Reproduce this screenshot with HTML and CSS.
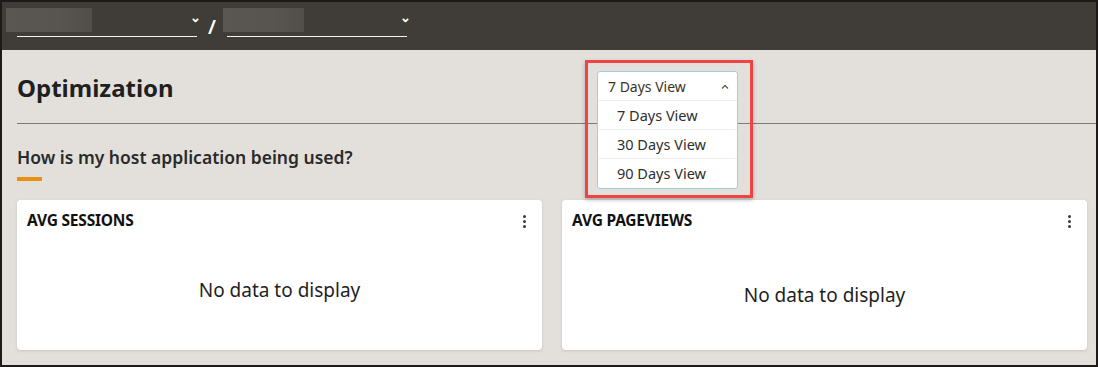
FILE: index.html
```html
<!DOCTYPE html>
<html lang="en">
<head>
    <meta charset="UTF-8">
    <meta name="viewport" content="width=device-width, initial-scale=1.0">
    <title>Optimization</title>
    <link rel="stylesheet" href="styles.css">
</head>
<body>
    <div class="frame">
        <div class="topbar">
            <div class="picker">
                <div class="redact redact-first"></div>
                <span class="chevron">&#8964;</span>
            </div>
            <span class="slash">/</span>
            <div class="picker">
                <div class="redact redact-second"></div>
                <span class="chevron">&#8964;</span>
            </div>
        </div>

        <div class="content">
            <div class="page-head">
                <h1>Optimization</h1>
            </div>
            <div class="divider"></div>

            <h2 class="section-title">How is my host application being used?</h2>
            <div class="accent"></div>

            <div class="cards">
                <div class="card">
                    <div class="card-header">
                        <span class="card-title">AVG SESSIONS</span>
                        <span class="kebab"><i></i><i></i><i></i></span>
                    </div>
                    <div class="card-body">No data to display</div>
                </div>
                <div class="card">
                    <div class="card-header">
                        <span class="card-title">AVG PAGEVIEWS</span>
                        <span class="kebab"><i></i><i></i><i></i></span>
                    </div>
                    <div class="card-body card-body-low">No data to display</div>
                </div>
            </div>

            <!-- open view selector, highlighted -->
            <div class="highlight">
                <div class="listbox">
                    <div class="listbox-value">
                        <span>7 Days View</span>
                        <svg class="caret" width="8" height="5" viewBox="0 0 8 5"><path d="M1 4.5 L4 1.5 L7 4.5" fill="none" stroke="#6b5a44" stroke-width="1.3"/></svg>
                    </div>
                    <div class="option">7 Days View</div>
                    <div class="option">30 Days View</div>
                    <div class="option">90 Days View</div>
                </div>
            </div>
        </div>
    </div>
</body>
</html>
```

FILE: styles.css
```css
* {
    margin: 0;
    padding: 0;
    box-sizing: border-box;
}

body {
    font-family: "Noto Sans", "Open Sans", sans-serif;
    background: #e3e0dc;
    color: #1f1f1f;
}

.frame {
    width: 1098px;
    height: 367px;
    border: 2px solid #1c1b1a;
    background: #e3e0dc;
    overflow: hidden;
}

.topbar {
    height: 48px;
    background: #403c37;
    display: flex;
    align-items: flex-start;
    padding-left: 15px;
    padding-top: 11px;
}

.picker {
    position: relative;
    width: 180px;
    height: 24px;
    border-bottom: 1px solid #f2f2f2;
}

.redact {
    position: absolute;
    top: -5px;
    height: 24px;
    background: linear-gradient(90deg, #5a5651 0%, #58544f 60%, #524e49 100%);
}

.redact-first {
    left: -11px;
    width: 86px;
}

.redact-second {
    left: -4px;
    width: 81px;
}

.chevron {
    position: absolute;
    right: -4px;
    top: -5px;
    color: #ffffff;
    font-size: 13px;
    font-weight: 700;
}

.slash {
    color: #ffffff;
    font-size: 20px;
    font-weight: 600;
    width: 30px;
    text-align: center;
    line-height: 24px;
    margin-top: 2px;
}

.content {
    position: relative;
    padding: 0 9px 0 15px;
}

.page-head {
    height: 73px;
    display: flex;
    align-items: center;
    padding-top: 2px;
}

.page-head h1 {
    font-size: 24px;
    font-weight: 700;
    color: #1f1f1f;
}

.divider {
    height: 1px;
    background: #7d7b78;
    margin-right: -9px;
}

.section-title {
    font-size: 17.5px;
    font-weight: 600;
    color: #2a2a2a;
    margin-top: 21px;
    line-height: 24px;
}

.accent {
    width: 25px;
    height: 4px;
    background: #e8900f;
    margin-top: 8px;
}

.cards {
    display: grid;
    grid-template-columns: 1fr 1fr;
    gap: 20px;
    margin-top: 19px;
}

.card {
    background: #ffffff;
    border-radius: 4px;
    height: 150px;
    box-shadow: 0 1px 3px rgba(0, 0, 0, 0.12);
    display: flex;
    flex-direction: column;
}

.card-header {
    display: flex;
    justify-content: space-between;
    align-items: center;
    padding: 9px 16px 0 10px;
}

.card-title {
    font-size: 15.5px;
    font-weight: 700;
    color: #111111;
    letter-spacing: -0.2px;
}

.kebab {
    display: flex;
    flex-direction: column;
    gap: 2px;
    padding-top: 2px;
}

.kebab i {
    width: 3px;
    height: 3px;
    border-radius: 50%;
    background: #3a3a3a;
}

.card-body {
    flex: 1;
    display: flex;
    justify-content: center;
    align-items: center;
    padding-bottom: 2px;
    font-size: 19px;
    color: #1f1f1f;
}

.card-body-low {
    padding-bottom: 0;
    padding-top: 8px;
}

.highlight {
    position: absolute;
    left: 583px;
    top: 10px;
    width: 168px;
    height: 138px;
    border: 3px solid #ef4444;
    box-shadow: 0 2px 4px rgba(0, 0, 0, 0.25);
    padding: 8px 12px 0 9px;
}

.listbox {
    background: #ffffff;
    border: 1px solid #9fcde2;
    border-radius: 3px;
    font-size: 14px;
    color: #2e2e2e;
}

.listbox-value {
    height: 29px;
    display: flex;
    justify-content: space-between;
    align-items: center;
    padding: 0 8px 0 10px;
    border-bottom: 1px solid #efefef;
    color: #3b3226;
}

.option {
    height: 29px;
    line-height: 29px;
    padding-left: 19px;
    font-size: 14.5px;
    border-bottom: 1px solid #efefef;
}

.option:last-child {
    border-bottom: none;
}
```
